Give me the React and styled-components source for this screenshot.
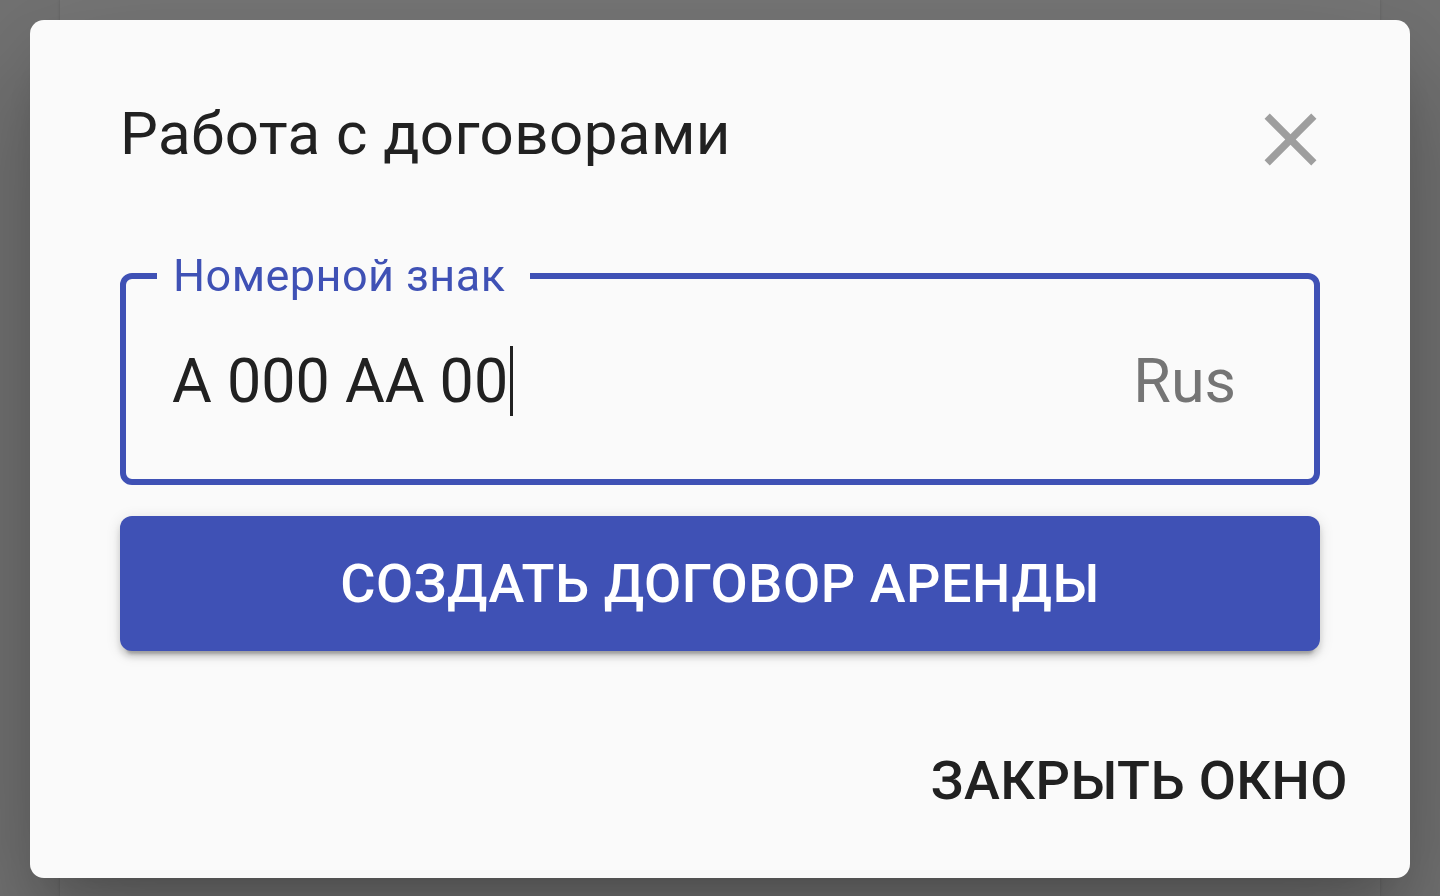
import React from "react";
import styled, { createGlobalStyle } from "styled-components";

const GlobalStyle = createGlobalStyle`
  html, body {
    margin: 0;
    padding: 0;
    height: 100%;
    overflow: hidden;
  }
  body {
    background: #737373;
    font-family: Roboto, "Noto Sans", "Liberation Sans", sans-serif;
  }
`;

export default function App() {
  return (
    <>
      <GlobalStyle />
      <Page>
        <BehindCard />
      </Page>
      <Overlay>
        <Dialog>
          <Header>
            <Title>Работа с договорами</Title>
            <CloseIcon aria-label="close">
              <svg viewBox="0 0 24 24" width="89" height="89">
                <path
                  fill="#9e9e9e"
                  d="M19 6.41 17.59 5 12 10.59 6.41 5 5 6.41 10.59 12 5 17.59 6.41 19 12 13.41 17.59 19 19 17.59 13.41 12z"
                />
              </svg>
            </CloseIcon>
          </Header>
          <Content>
            <Field>
              <Legend>Номерной знак</Legend>
              <InputRow>
                <Value>
                  А 000 АА 00
                  <Caret />
                </Value>
                <Suffix>Rus</Suffix>
              </InputRow>
            </Field>
            <PrimaryButton>Создать договор аренды</PrimaryButton>
          </Content>
          <Actions>
            <TextButton>Закрыть окно</TextButton>
          </Actions>
        </Dialog>
      </Overlay>
    </>
  );
}

const Page = styled.div`
  height: 896px;
  padding: 0 60px;
  box-sizing: border-box;
`;

const BehindCard = styled.div`
  height: 100%;
  background: #787878;
  box-shadow: -1px 0 2px rgba(0, 0, 0, 0.08), 1px 0 2px rgba(0, 0, 0, 0.08);
`;

const Overlay = styled.div`
  position: fixed;
  inset: 0;
  padding: 20px 30px 18px;
  box-sizing: border-box;
  display: flex;
  align-items: flex-start;
`;

const Dialog = styled.div`
  width: 1380px;
  height: 858px;
  box-sizing: border-box;
  background: #fafafa;
  border-radius: 14px;
  display: flex;
  flex-direction: column;
  box-shadow: 0 33px 45px -21px rgba(0, 0, 0, 0.2),
    0 72px 114px 9px rgba(0, 0, 0, 0.14), 0 27px 138px 24px rgba(0, 0, 0, 0.12);
`;

const Header = styled.div`
  display: flex;
  align-items: center;
  justify-content: space-between;
  padding: 78px 75px 0 90px;
  height: 72px;
`;

const Title = styled.h2`
  margin: 0;
  font-size: 60px;
  line-height: 72px;
  font-weight: 400;
  letter-spacing: 0.0075em;
  color: #212121;
`;

const CloseIcon = styled.div`
  width: 89px;
  height: 89px;
  margin-top: 10px;
  display: flex;
  align-items: center;
  justify-content: center;
`;

const Content = styled.div`
  padding: 86px 90px 0;
  display: flex;
  flex-direction: column;
  gap: 31px;
`;

const Field = styled.fieldset`
  margin: 0;
  padding: 0;
  border: 6px solid #3f51b5;
  border-radius: 12px;
  min-width: 0;
`;

const Legend = styled.legend`
  margin-left: 31px;
  padding: 0 25px 0 16px;
  font-size: 45px;
  line-height: 40px;
  color: #3f51b5;
  letter-spacing: 0.01em;
`;

const InputRow = styled.div`
  display: flex;
  align-items: center;
  justify-content: space-between;
  padding: 50px 78px 63px 46px;
`;

const Value = styled.div`
  display: flex;
  align-items: center;
  font-size: 61px;
  line-height: 70px;
  color: #212121;
  white-space: pre;
`;

const Caret = styled.span`
  display: inline-block;
  width: 3px;
  height: 70px;
  margin-left: 2px;
  background: #212121;
`;

const Suffix = styled.span`
  font-size: 61px;
  line-height: 70px;
  color: #757575;
`;

const PrimaryButton = styled.button`
  height: 135px;
  border: none;
  border-radius: 12px;
  background: #3f51b5;
  color: #ffffff;
  font-family: inherit;
  font-size: 54px;
  font-weight: 500;
  letter-spacing: 0.01em;
  text-transform: uppercase;
  box-shadow: 0 9px 3px -6px rgba(0, 0, 0, 0.2),
    0 6px 6px 0 rgba(0, 0, 0, 0.14), 0 3px 15px 0 rgba(0, 0, 0, 0.12);
`;

const Actions = styled.div`
  margin-top: auto;
  display: flex;
  justify-content: flex-end;
  padding: 0 62px 65px;
`;

const TextButton = styled.button`
  border: none;
  background: transparent;
  padding: 0;
  color: #212121;
  font-family: inherit;
  font-size: 54px;
  line-height: 64px;
  font-weight: 500;
  letter-spacing: 0.008em;
  text-transform: uppercase;
`;
